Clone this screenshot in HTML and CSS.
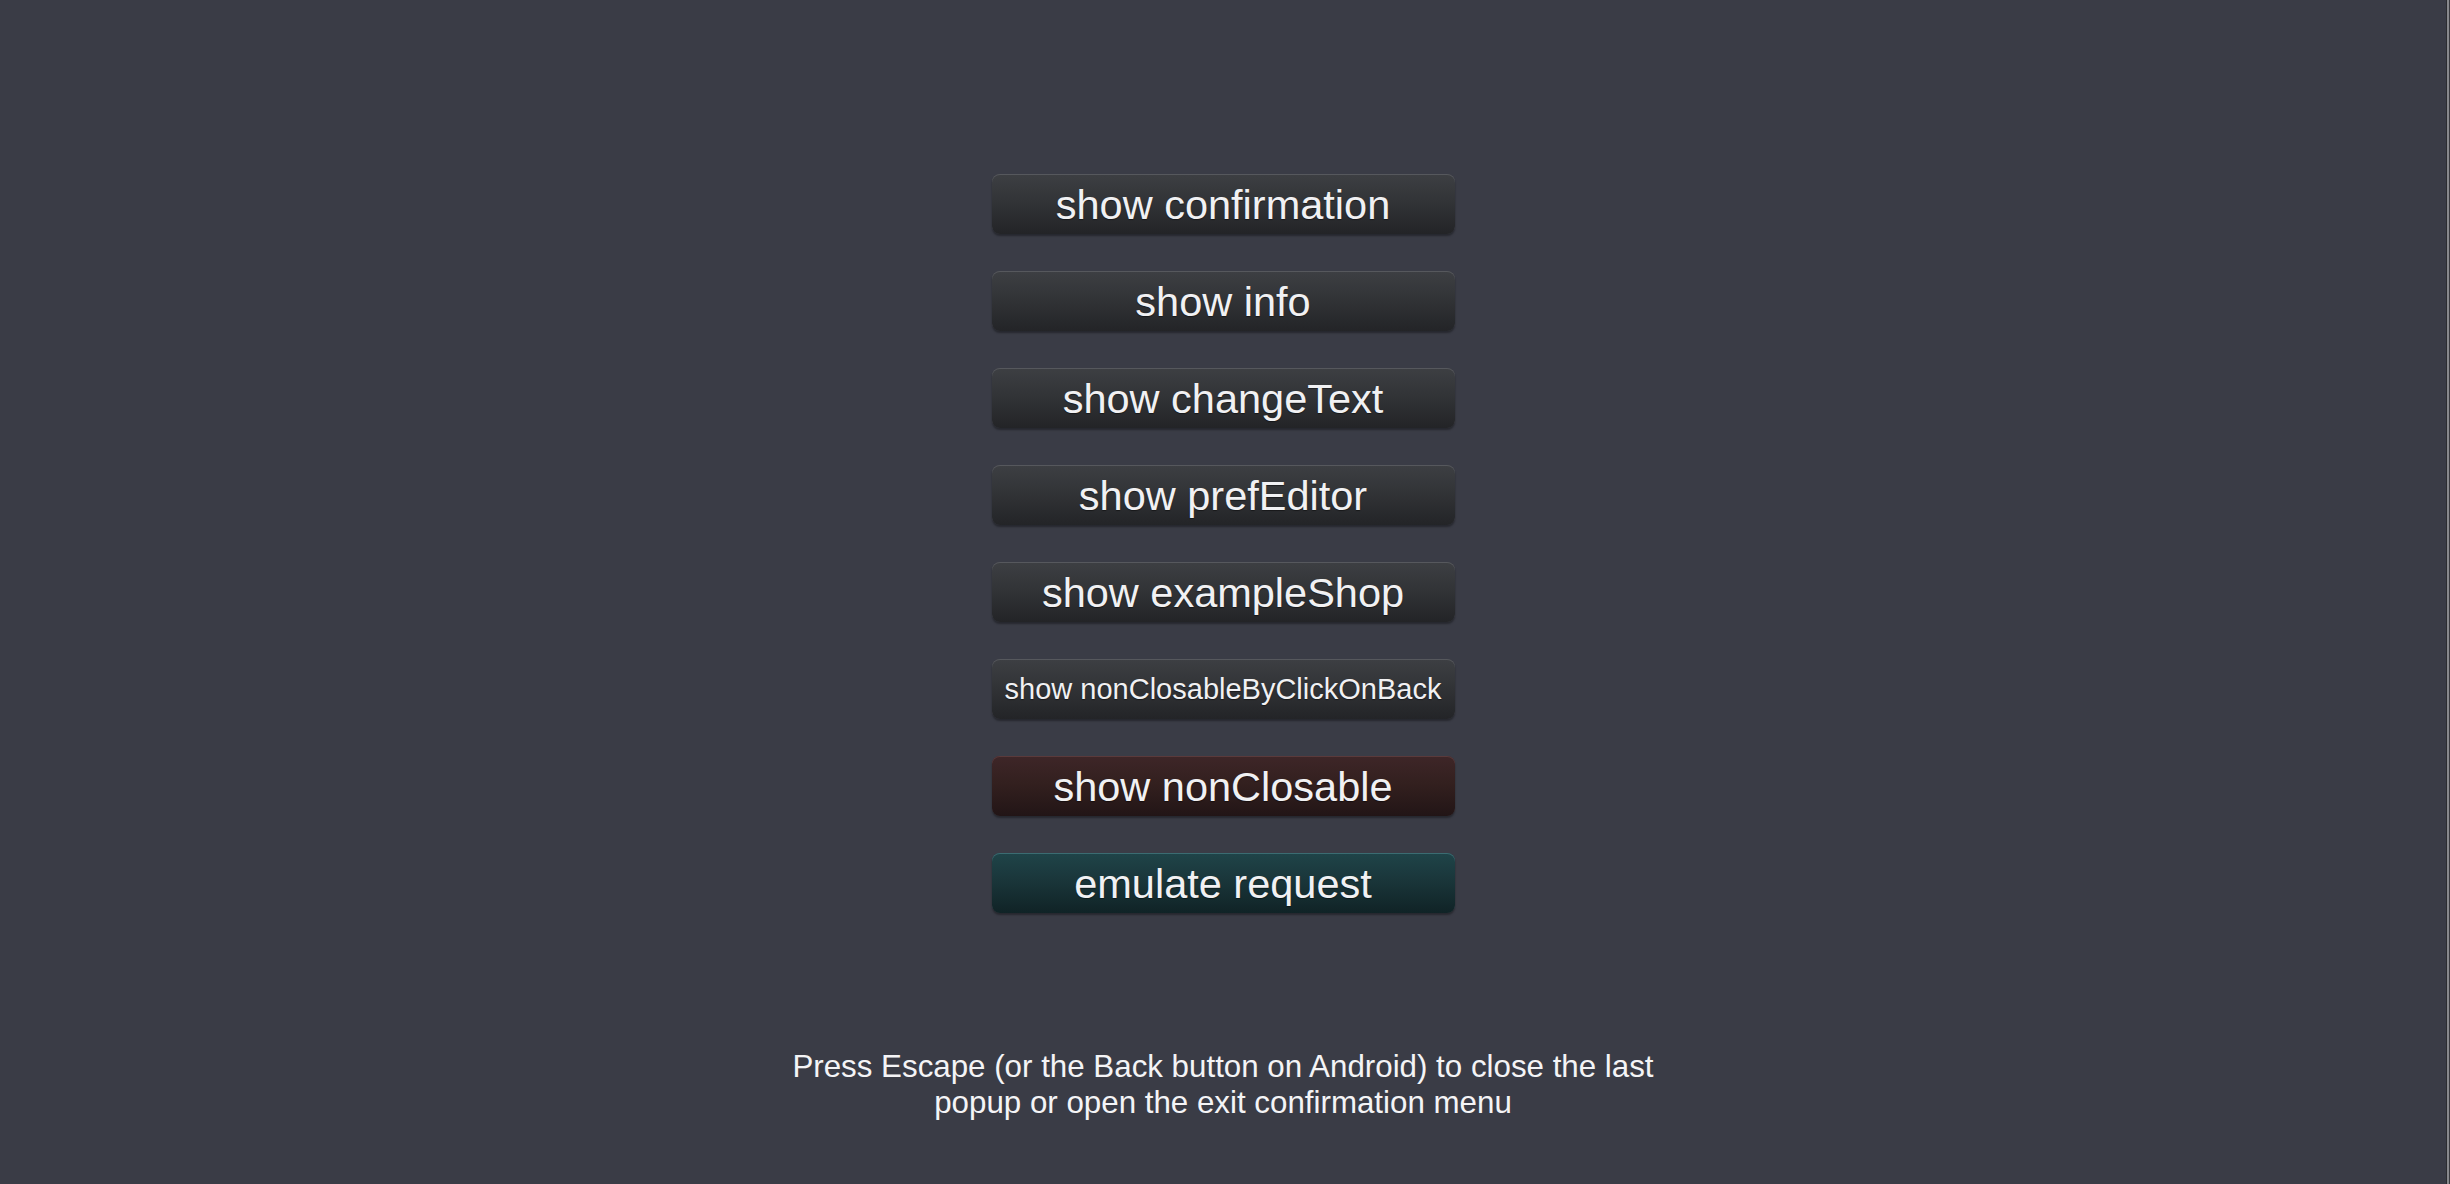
FILE: index.html
```html
<!DOCTYPE html>
<html lang="en">
<head>
<meta charset="utf-8">
<title>Popups demo</title>
<link rel="stylesheet" href="styles.css">
</head>
<body>
<div class="screen">
  <main class="stage">
    <div class="menu">
      <button class="btn">show confirmation</button>
      <button class="btn">show info</button>
      <button class="btn">show changeText</button>
      <button class="btn">show prefEditor</button>
      <button class="btn">show exampleShop</button>
      <button class="btn btn-small">show nonClosableByClickOnBack</button>
      <button class="btn btn-red">show nonClosable</button>
      <button class="btn btn-teal">emulate request</button>
    </div>
    <p class="hint">Press Escape (or the Back button on Android) to close the last popup or open the exit confirmation menu</p>
  </main>
  <div class="edge">
    <span class="edge-a"></span>
    <span class="edge-b"></span>
    <span class="edge-c"></span>
  </div>
</div>
</body>
</html>
```
FILE: styles.css
```css
html, body {
  margin: 0;
  padding: 0;
  height: 100%;
}
body {
  background: #3a3c46;
  font-family: "Liberation Sans", Arial, sans-serif;
  color: #f2f2f2;
  overflow: hidden;
}
.screen {
  display: flex;
  height: 1184px;
}
.stage {
  flex: 1;
  display: flex;
  flex-direction: column;
  align-items: center;
  padding-top: 174px;
}
.menu {
  display: flex;
  flex-direction: column;
  gap: 37px;
}
.btn {
  box-sizing: border-box;
  width: 463px;
  height: 60px;
  border: 0;
  border-radius: 8px;
  padding: 1px 0 0;
  margin: 0;
  font-family: "Liberation Sans", Arial, sans-serif;
  font-size: 41.5px;
  line-height: 59px;
  color: #f1f1f3;
  text-shadow: 0 1px 1px rgba(0,0,0,0.45);
  background: linear-gradient(#3d3f43 0%, #323437 45%, #232427 100%);
  box-shadow: inset 0 1px 0 #56585d, 0 2px 2px rgba(0,0,0,0.35);
  text-align: center;
  white-space: nowrap;
}
.btn-small {
  font-size: 29px;
}
.btn-red {
  background: linear-gradient(#3e2628 0%, #33201f 45%, #221516 100%);
  box-shadow: inset 0 1px 0 #5a3a3b, 0 2px 2px rgba(0,0,0,0.35);
}
.btn-teal {
  background: linear-gradient(#1f4449 0%, #1a363a 45%, #102326 100%);
  box-shadow: inset 0 1px 0 #3b6c72, 0 2px 2px rgba(0,0,0,0.35);
}
.hint {
  margin: 136px 0 0;
  width: 900px;
  font-size: 31.3px;
  line-height: 36px;
  text-align: center;
  color: #f4f4f6;
}
.edge {
  display: flex;
  width: 4px;
}
.edge span {
  display: block;
  height: 100%;
}
.edge-a { width: 1px; background: #2c2d31; }
.edge-b { width: 2px; background: #88898d; }
.edge-c { width: 1px; background: #3a3b40; }
```
